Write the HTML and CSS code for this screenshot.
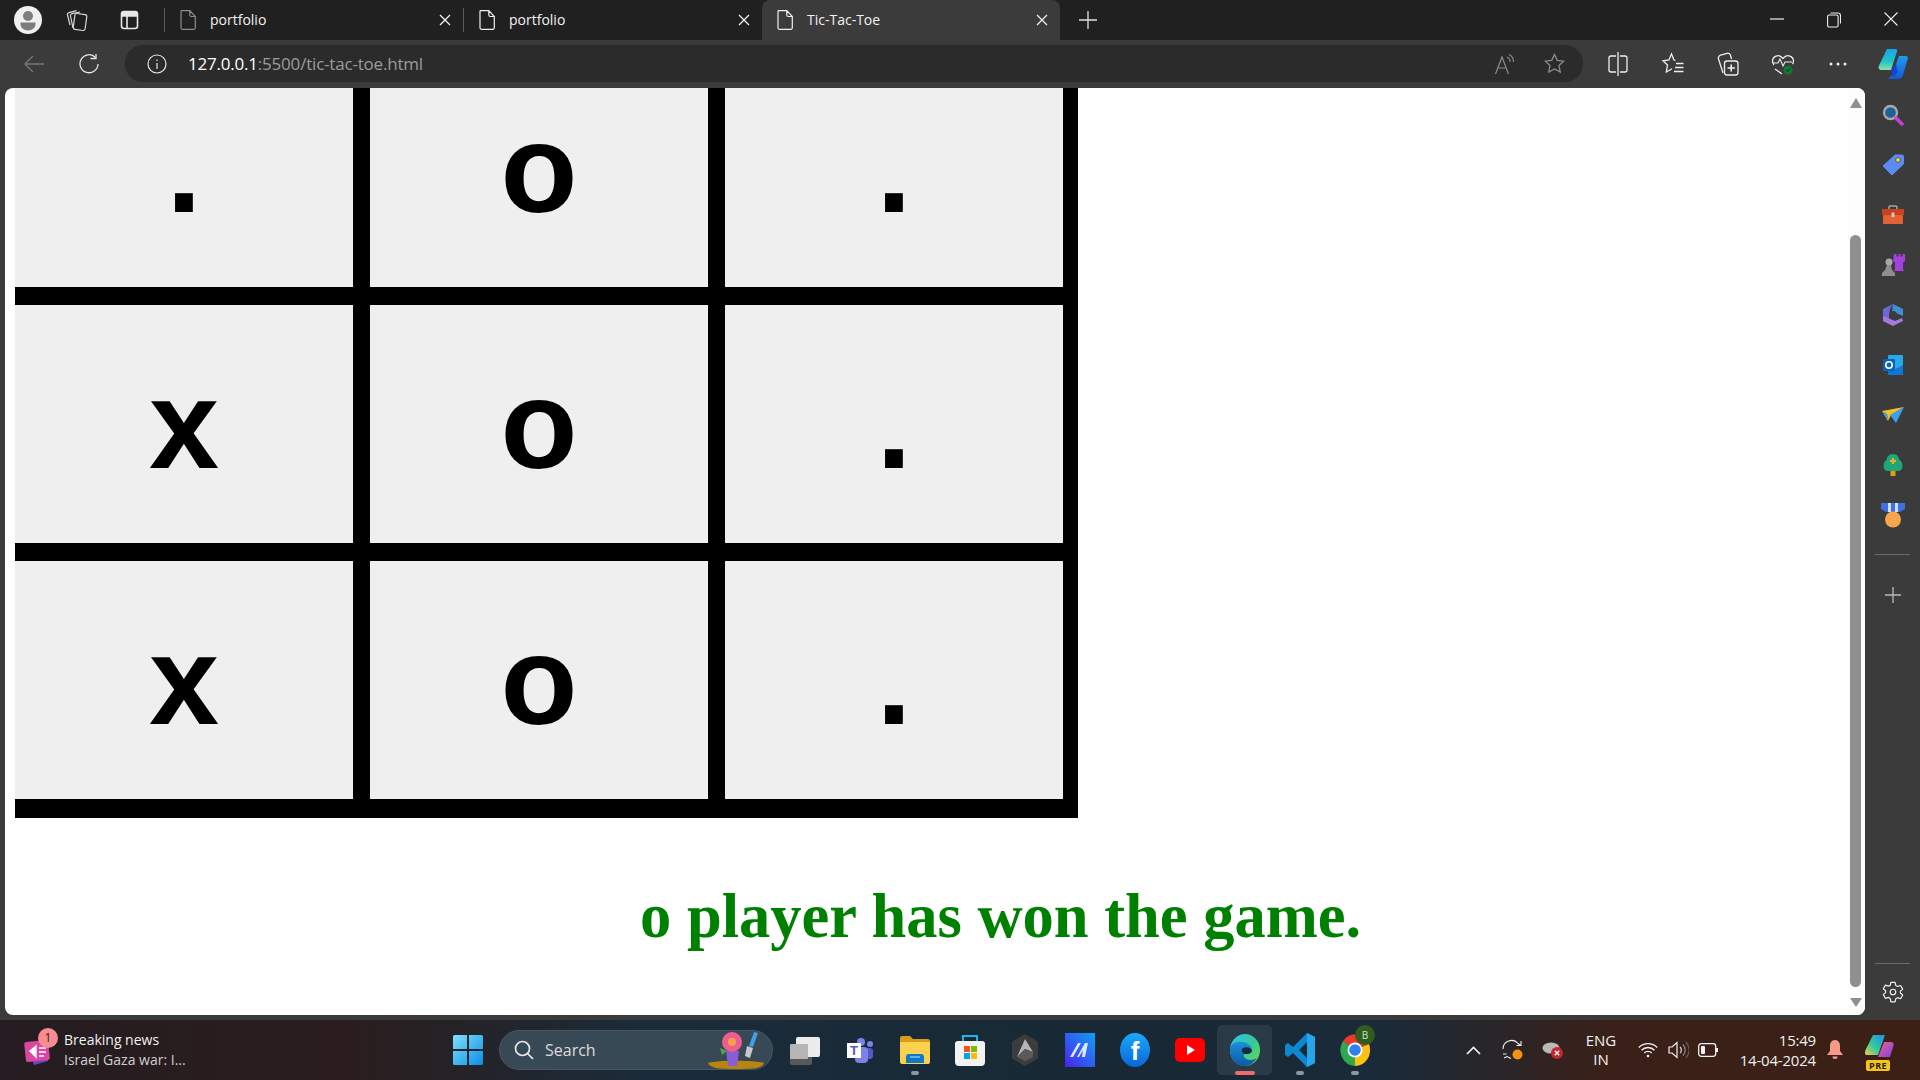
FILE: index.html
```html
<!DOCTYPE html>
<html lang="en">
<head>
    <meta charset="UTF-8">
    <meta name="viewport" content="width=device-width, initial-scale=1.0">
    <title>Tic-Tac-Toe</title>
    <link rel="stylesheet" href="styles.css">
</head>
<body>
    <svg class="defs" width="0" height="0">
        <symbol id="doc" viewBox="0 0 16 20"><path d="M2.5.7h7.3l5.5 5.8v11.3a1.5 1.5 0 0 1-1.5 1.5h-11.300a1.500 1.500 0 0 1-1.500-1.500v-16.100a1.500 1.500 0 0 1 1.500-1.500zM9.800.7v4.300a1.500 1.500 0 0 0 1.500 1.500h4" fill="none" stroke="currentColor" stroke-width="1.200"/></symbol>
        <symbol id="close" viewBox="0 0 12 12"><path d="M1 1l10 10M11 1l-10 10" stroke="currentColor" stroke-width="1.300" fill="none"/></symbol>
    </svg>

    <div class="tabstrip">
        <div class="avatar">
            <svg width="28" height="28" viewBox="0 0 28 28"><circle cx="14" cy="14" r="14" fill="#f0f0f0"/><circle cx="14" cy="10" r="5" fill="#7d7d7d"/><path d="M6.500 16.500h15v2a7.500 6 0 0 1-15 0z" fill="#7d7d7d"/></svg>
        </div>
        <div class="strip-btn">
            <svg width="22" height="24" viewBox="0 0 22 24" fill="none" stroke="#d8d8d8" stroke-width="1.200"><rect x="8" y="6" width="12" height="16" rx="2" transform="rotate(8 14 14)"/><path d="M7 20L4.500 8a2 2 0 0 1 1.600-2.400l8-1.600M4 17L1.500 7a2 2 0 0 1 1.500-2.400l7.500-2"/></svg>
        </div>
        <div class="strip-btn strip-btn-wide">
            <svg width="20" height="20" viewBox="0 0 20 20" fill="none" stroke="#e8e8e8" stroke-width="1.600"><rect x="1.500" y="1.500" width="16" height="17" rx="2.500"/><path d="M1.500 6h16M7 6v12.500"/><path d="M2 2h15v4H2z" fill="#e8e8e8" stroke="none"/></svg>
        </div>

        <div class="tab tab-first">
            <svg class="tab-icon dim"><use href="#doc"/></svg>
            <span class="tab-title">portfolio</span>
            <svg class="tab-close"><use href="#close"/></svg>
        </div>
        <div class="tab">
            <svg class="tab-icon"><use href="#doc"/></svg>
            <span class="tab-title">portfolio</span>
            <svg class="tab-close"><use href="#close"/></svg>
        </div>
        <div class="tab tab-active">
            <svg class="tab-icon"><use href="#doc"/></svg>
            <span class="tab-title">Tic-Tac-Toe</span>
            <svg class="tab-close"><use href="#close"/></svg>
        </div>
        <div class="new-tab">
            <svg width="18" height="18" viewBox="0 0 18 18"><path d="M9 0v18M0 9h18" stroke="#e4e4e4" stroke-width="1.300"/></svg>
        </div>

        <div class="window-btns">
            <div class="window-btn"><svg width="14" height="14" viewBox="0 0 14 14"><path d="M0 7h14" stroke="#eee" stroke-width="1.200"/></svg></div>
            <div class="window-btn"><svg width="14" height="16" viewBox="0 0 14 16" fill="none" stroke="#eee" stroke-width="1.100"><rect x=".6" y="3" width="10.500" height="12" rx="1.500"/><path d="M3.500 1h7.500a2.500 2.500 0 0 1 2.500 2.500v8"/></svg></div>
            <div class="window-btn"><svg width="14" height="14" viewBox="0 0 14 14"><path d="M.5.5l13 13M13.500.5l-13 13" stroke="#eee" stroke-width="1.100"/></svg></div>
        </div>
    </div>

    <div class="toolbar">
        <div class="nav-btn">
            <svg width="20" height="18" viewBox="0 0 20 18" fill="none" stroke="#777" stroke-width="1.400"><path d="M20 9H1M9 1L1 9l8 8"/></svg>
        </div>
        <div class="nav-btn">
            <svg width="20" height="20" viewBox="0 0 20 20" fill="none" stroke="#e6e6e6" stroke-width="1.300"><path d="M16.500 3.500A9 9 0 1 0 19 10"/><path d="M11.500 4.500h5.500v-5"/></svg>
        </div>
        <div class="address-bar">
            <svg class="info-icon" width="20" height="20" viewBox="0 0 20 20" fill="none" stroke="#e6e6e6" stroke-width="1.200"><circle cx="10" cy="10" r="9"/><path d="M10 9v6M10 5.500v1.500"/></svg>
            <span class="url"><span class="url-host">127.0.0.1</span>:5500/tic-tac-toe.html</span>
            <div class="address-actions">
                <svg width="22" height="22" viewBox="0 0 22 22" fill="none" stroke="#8c8c8c" stroke-width="1.200"><path d="M1.500 21L8 4l6.500 17M4 15h8"/><path d="M13 4a5 5 0 0 1 3 5M15 1.500a8 8 0 0 1 4.500 7.500"/></svg>
                <svg width="21" height="21" viewBox="0 0 21 21" fill="none" stroke="#8c8c8c" stroke-width="1.300"><path d="M10.500 1.500l2.800 5.900 6.400.8-4.700 4.400 1.200 6.400-5.700-3.100-5.700 3.100 1.200-6.400-4.700-4.400 6.400-.8z"/></svg>
            </div>
        </div>
        <div class="tool-btn">
            <svg width="20" height="24" viewBox="0 0 20 24" fill="none" stroke="#eee" stroke-width="1.300"><path d="M8 4H3a2 2 0 0 0-2 2v12a2 2 0 0 0 2 2h5M12 4h5a2 2 0 0 1 2 2v12a2 2 0 0 1-2 2h-5M10 0v24"/></svg>
        </div>
        <div class="tool-btn">
            <svg width="22" height="24" viewBox="0 0 22 24" fill="none" stroke="#eee" stroke-width="1.300"><path d="M13.500 8.500L12 8 9.500 2 7 8l-6 .8 4.500 4.300L4.300 20l5.700-3.200"/><path d="M14 11.500h7.500M13 15.500h8.500M12 19.500h9.500"/></svg>
        </div>
        <div class="tool-btn">
            <svg width="22" height="24" viewBox="0 0 22 24" fill="none" stroke="#eee" stroke-width="1.300"><path d="M6 21L1.500 7a3 3 0 0 1 2-3.800L10 1.300a3 3 0 0 1 3.500 2L14.500 7"/><rect x="7.500" y="9" width="13.500" height="14" rx="2.500"/><path d="M14.200 12.500v7M10.500 16h7.400" stroke-width="1.600"/></svg>
        </div>
        <div class="tool-btn">
            <svg width="24" height="24" viewBox="0 0 24 24" fill="none"><path d="M3 13a6 6 0 0 1-1.500-4A5.500 5.500 0 0 1 11 5.500l1 1 1-1A5.500 5.500 0 0 1 22.500 9a6 6 0 0 1-1 3.200M4 17l7 5" stroke="#eee" stroke-width="1.300"/><path d="M2 11h5l2-4 3 7 2-4h7" stroke="#eee" stroke-width="1.100"/><circle cx="17" cy="18" r="4.500" fill="#0f7b2f"/><path d="M15 18l1.500 1.500 2.500-3" stroke="#222" stroke-width="1"/></svg>
        </div>
        <div class="tool-btn">
            <svg width="18" height="4" viewBox="0 0 18 4" fill="#eee"><circle cx="2" cy="2" r="1.500"/><circle cx="9" cy="2" r="1.500"/><circle cx="16" cy="2" r="1.500"/></svg>
        </div>
        <div class="tool-btn">
            <svg width="30" height="32" viewBox="0 0 30 32">
                <defs>
                    <linearGradient id="cop-a" x1="0" y1="0" x2="0" y2="1"><stop offset="0" stop-color="#1aa5e8"/><stop offset=".6" stop-color="#22c3c8"/><stop offset="1" stop-color="#8fe0a0"/></linearGradient>
                    <linearGradient id="cop-b" x1="0" y1="0" x2="0" y2="1"><stop offset="0" stop-color="#1f9bf0"/><stop offset="1" stop-color="#1458d8"/></linearGradient>
                </defs>
                <path d="M9 1h8.500c1.500 0 2 1 1.500 2.500L13 22H4C1 22 0 20 .8 18z" fill="url(#cop-a)"/>
                <path d="M21 8h7c1.500 0 2.200 1.200 1.700 2.800L25 27c-.8 2.600-2.500 4-5 4H10l4-4z" fill="url(#cop-b)"/>
                <path d="M13 22l5-6 2 8-5 5z" fill="#1247c8"/>
            </svg>
        </div>
    </div>

    <div class="main">
        <div class="page">
            <div class="page-content">
                <div class="board">
                    <div class="cell">.</div>
                    <div class="cell">o</div>
                    <div class="cell">.</div>
                    <div class="cell">x</div>
                    <div class="cell">o</div>
                    <div class="cell">.</div>
                    <div class="cell">x</div>
                    <div class="cell">o</div>
                    <div class="cell">.</div>
                </div>
                <h1 class="message">o player has won the game.</h1>
            </div>
            <div class="scrollbar">
                <div class="arrow-up"></div>
                <div class="thumb"></div>
                <div class="arrow-down"></div>
            </div>
        </div>

        <div class="sidebar">
            <div class="side-btn">
                <svg width="22" height="22" viewBox="0 0 22 22"><circle cx="8.500" cy="8.500" r="6.500" fill="#1f5f94" stroke="#a8a8a8" stroke-width="2.400"/><path d="M14 14l6 6" stroke="#c93fd8" stroke-width="3.400" stroke-linecap="round"/></svg>
            </div>
            <div class="side-btn">
                <svg width="22" height="22" viewBox="0 0 22 22"><path d="M13 1h7a1.500 1.500 0 0 1 1.500 1.500V10L10 21 1 12z" fill="#5b8cf5" stroke="#5b8cf5" stroke-linejoin="round"/><circle cx="16" cy="6" r="2.400" fill="#f5d33a" stroke="#333" stroke-width=".7"/></svg>
            </div>
            <div class="side-btn">
                <svg width="24" height="20" viewBox="0 0 24 20"><path d="M8 5V2a1 1 0 0 1 1-1h6a1 1 0 0 1 1 1v3" fill="none" stroke="#a5a5a5" stroke-width="1.500"/><rect x="1" y="4" width="22" height="6" fill="#c8421e"/><rect x="2" y="10" width="20" height="9" rx="1" fill="#e26236"/><rect x="10.500" y="7.500" width="3" height="4.500" fill="#c9c9c9"/></svg>
            </div>
            <div class="side-btn">
                <svg width="24" height="24" viewBox="0 0 24 24"><path d="M13 1h2.500v2.500h2V1h2v2.500h2V1H24v7l-2 1.500V16l1 2H13l1-2V9.500L12 8z" fill="#a43fe0"/><circle cx="8" cy="9" r="3.500" fill="#a8a8a8"/><path d="M6 12h4l1 5 3 3v3H1v-3l3-3z" fill="#8f8f8f"/></svg>
            </div>
            <div class="side-btn">
                <svg width="22" height="24" viewBox="0 0 22 24"><path d="M11 1l10 5v7l-7-3-4 3v-4z" fill="#3f8fd8"/><path d="M1 6l10-5-3 5-1 10-6 1z" fill="#6a68d8"/><path d="M1 13l0 5 10 5 10-5-1-3-7 3z" fill="#a57ae0"/><circle cx="11" cy="12" r="4" fill="#3b3b3b"/></svg>
            </div>
            <div class="side-btn">
                <svg width="22" height="22" viewBox="0 0 22 22"><rect x="6" y="1" width="15" height="20" rx="1" fill="#28a8ea"/><path d="M6 11l7.500 4L21 11v10H6z" fill="#0f78d4"/><rect x="1" y="5" width="12" height="12" rx="1" fill="#0864b8"/><circle cx="7" cy="11" r="3.200" fill="none" stroke="#fff" stroke-width="1.600"/></svg>
            </div>
            <div class="side-btn">
                <svg width="22" height="18" viewBox="0 0 22 18"><path d="M0 5l22-4-13 8-3 6z" fill="#f3c221"/><path d="M0 5l5 3 2 7z" fill="#2f9ae8"/><path d="M22 1L14 17 8 9z" fill="#3aa0ee"/></svg>
            </div>
            <div class="side-btn">
                <svg width="20" height="24" viewBox="0 0 20 24"><rect x="7.500" y="17" width="5" height="6" fill="#e0a010"/><path d="M10 1c4 0 6 3 6.500 6 2 1 3 3.500 3 6 0 3-2 5-4.500 5H5c-2.500 0-4.500-2-4.500-5 0-2.500 1-5 3-6C4 4 6 1 10 1z" fill="#1fa77a"/><path d="M10 5v6M7 8h6" stroke="#f0b020" stroke-width="2"/></svg>
            </div>
            <div class="side-btn">
                <svg width="26" height="26" viewBox="0 0 26 26"><path d="M1 1h24v6l-5 3H6L1 7z" fill="#3f6fe0"/><path d="M8 1h10v9H8z" fill="#cfe0ff"/><path d="M11 1h4v10h-4z" fill="#3f6fe0"/><circle cx="13" cy="17.500" r="8" fill="#f7a64d"/></svg>
            </div>
            <div class="side-sep side-sep-first"></div>
            <div class="side-btn side-plus">
                <svg width="16" height="16" viewBox="0 0 16 16"><path d="M8 0v16M0 8h16" stroke="#bbb" stroke-width="1.300"/></svg>
            </div>
            <div class="side-sep side-sep-last"></div>
            <div class="side-gear">
                <svg width="22" height="22" viewBox="0 0 24 24" fill="none" stroke="#eee" stroke-width="1.300"><circle cx="12" cy="12" r="3"/><path d="M9.700 1.500h4.600l.7 3.300 2.100 1.200 3.200-1.100 2.300 4-2.500 2.200v2l2.500 2.200-2.300 4-3.200-1.100-2.100 1.200-.7 3.300H9.700L9 19l-2.100-1.200-3.200 1.100-2.300-4 2.500-2.200v-2L1.400 8.500l2.300-4 3.200 1.100L9 4.800z" stroke-linejoin="round"/></svg>
            </div>
        </div>
    </div>

    <div class="taskbar">
        <div class="news">
            <div class="news-icon">
                <svg width="30" height="34" viewBox="0 0 30 34"><path d="M3 12l18-4 3 20-14 4z" fill="#6a42d0"/><rect x="1" y="8" width="24" height="20" rx="2" fill="#d9479e" transform="rotate(-6 13 18)"/><path d="M6 18l6-5v11zM15 15h7M15 19h7M15 23h5" fill="#fff" stroke="#fff" stroke-width="1.400"/></svg>
                <span class="news-badge">1</span>
            </div>
            <div class="news-text">
                <div class="news-title">Breaking news</div>
                <div class="news-sub">Israel Gaza war: I...</div>
            </div>
        </div>

        <div class="start">
            <svg width="30" height="30" viewBox="0 0 30 30">
                <defs><linearGradient id="win" x1="0" y1="0" x2="1" y2="1"><stop offset="0" stop-color="#7fe0fb"/><stop offset="1" stop-color="#0a8fe8"/></linearGradient></defs>
                <path d="M0 1.500A1.500 1.500 0 0 1 1.500 0H14v14H0zM16 0h12.500A1.500 1.500 0 0 1 30 1.500V14H16zM0 16h14v14H1.500A1.500 1.500 0 0 1 0 28.500zM16 16h14v12.500a1.500 1.500 0 0 1-1.500 1.500H16z" fill="url(#win)"/>
            </svg>
        </div>

        <div class="search">
            <svg width="20" height="20" viewBox="0 0 20 20" fill="none" stroke="#e8e8e8" stroke-width="1.700"><circle cx="8.500" cy="8.500" r="7"/><path d="M13.500 13.500L19 19"/></svg>
            <span class="search-label">Search</span>
            <svg class="search-art" width="58" height="38" viewBox="0 0 58 38"><path d="M1 32c8-3 48-3 56 0-2 5-8 6-28 6S4 37 1 32z" fill="#b8860f"/><path d="M19 20h13l-2 15h-9z" fill="#8a5cd6"/><path d="M13 17l7 3-5 4z" fill="#4aa84a"/><circle cx="25" cy="11" r="10" fill="#ef5c8e"/><circle cx="25" cy="11" r="4" fill="#f5a14a"/><path d="M47 1l4 1-5 14-4-1z" fill="#3f9fe8"/><path d="M40 15l6 2-3 10-5-2z" fill="#c8c8c8"/></svg>
        </div>

        <div class="apps">
            <div class="app">
                <svg width="30" height="30" viewBox="0 0 30 30"><rect x="0" y="12" width="22" height="18" rx="2" fill="#595959"/><rect x="6" y="2" width="24" height="20" rx="2" fill="#ececec"/><rect x="0" y="9" width="18" height="15" rx="1" fill="#b5b5b5"/></svg>
            </div>
            <div class="app">
                <svg width="28" height="28" viewBox="0 0 28 28"><circle cx="24" cy="8" r="3" fill="#7b83eb"/><circle cx="15" cy="6" r="4" fill="#7b83eb"/><rect x="19" y="12" width="8" height="11" rx="3" fill="#5059c9"/><rect x="9" y="11" width="13" height="16" rx="4" fill="#7b83eb"/><rect x="1" y="7" width="14" height="15" fill="#fff"/><text x="8" y="19" class="teams-t">T</text></svg>
            </div>
            <div class="app">
                <svg width="30" height="28" viewBox="0 0 30 28"><path d="M0 2a2 2 0 0 1 2-2h8l3 3h15a2 2 0 0 1 2 2v6H0z" fill="#d89b1c"/><path d="M0 6h30v20a2 2 0 0 1-2 2H2a2 2 0 0 1-2-2z" fill="#fcd14d"/><path d="M6 27v-6a3 3 0 0 1 3-3h12a3 3 0 0 1 3 3v6z" fill="#0f78c8"/><path d="M10 21h10" stroke="#7fd0f5" stroke-width="1.400"/></svg>
                <span class="app-dot"></span>
            </div>
            <div class="app">
                <svg width="30" height="32" viewBox="0 0 30 32"><path d="M8 8V2h14v6" fill="none" stroke="#19b4ee" stroke-width="2"/><path d="M0 9a3 3 0 0 1 3-2h24a3 3 0 0 1 3 2v19a4 4 0 0 1-4 4H4a4 4 0 0 1-4-4z" fill="#f2f2f2"/><rect x="9" y="12" width="6" height="6" fill="#f25022"/><rect x="16" y="12" width="6" height="6" fill="#7fba00"/><rect x="9" y="19" width="6" height="6" fill="#00a4ef"/><rect x="16" y="19" width="6" height="6" fill="#ffb900"/></svg>
            </div>
            <div class="app">
                <svg width="26" height="32" viewBox="0 0 26 32"><path d="M13 0l13 7.500v17L13 32 0 24.500v-17z" fill="#3c3c3c"/><path d="M13 5l8 13-8-3-8 8z" fill="#b5b5b5"/><path d="M5 23l8-8 8 3 0 5-8 4z" fill="#5a5a5a"/></svg>
            </div>
            <div class="app">
                <svg width="30" height="34" viewBox="0 0 30 34"><defs><linearGradient id="ma" x1="0" y1="1" x2="1" y2="0"><stop offset="0" stop-color="#4a22f0"/><stop offset="1" stop-color="#10a0f5"/></linearGradient></defs><rect width="30" height="34" fill="url(#ma)"/><path d="M5 24L13 10h3L8 24zM12 24l8-14h3l-3 14h-3l1-7-4 7z" fill="#dfe6ff"/></svg>
            </div>
            <div class="app">
                <svg width="30" height="34" viewBox="0 0 30 34"><defs><linearGradient id="fb" x1="0" y1="0" x2="0" y2="1"><stop offset="0" stop-color="#19aaf8"/><stop offset="1" stop-color="#0a66d8"/></linearGradient></defs><ellipse cx="15" cy="17" rx="15" ry="17" fill="url(#fb)"/><text x="15" y="27" class="fb-f">f</text></svg>
            </div>
            <div class="app">
                <svg width="30" height="24" viewBox="0 0 30 24"><rect width="30" height="24" rx="5" fill="#ff0000"/><path d="M12 7l8 5-8 5z" fill="#fff"/></svg>
            </div>
            <div class="app app-active">
                <svg width="30" height="32" viewBox="0 0 30 32">
                    <defs>
                        <linearGradient id="edge-a" x1="0" y1="0" x2="1" y2="1"><stop offset="0" stop-color="#35c1f1"/><stop offset=".5" stop-color="#34c8a0"/><stop offset="1" stop-color="#6fdc3e"/></linearGradient>
                        <linearGradient id="edge-b" x1="0" y1="0" x2="0" y2="1"><stop offset="0" stop-color="#1c8fd8"/><stop offset="1" stop-color="#0c59a4"/></linearGradient>
                    </defs>
                    <ellipse cx="15" cy="16" rx="15" ry="16" fill="url(#edge-a)"/>
                    <path d="M0 16C0 9 7 7 13 8c5 1 9 4 9 8 0 3-3 4-6 4 -3 0-3 2-1 4 3 3 9 2 12 0-3 5-8 8-12 8C6 32 0 25 0 16z" fill="url(#edge-b)"/>
                    <path d="M12 15c3-3 8-2 10 1 0 3-3 4-6 4-2 0-5-2-4-5z" fill="#1b2a38"/>
                </svg>
                <span class="app-dot app-dot-active"></span>
            </div>
            <div class="app">
                <svg width="30" height="34" viewBox="0 0 30 34"><path d="M22 0l8 4v26l-8 4L8 20l-5 4-3-2v-10l3-2 5 4zM22 9l-8 8 8 8z" fill="#0e87d2" fill-rule="evenodd"/><path d="M22 0l8 4v26l-8 4z" fill="#27a5ea"/></svg>
                <span class="app-dot"></span>
            </div>
            <div class="app app-chrome">
                <svg width="30" height="32" viewBox="0 0 30 32"><path d="M15 16L3 7A15 16 0 0 1 29 10z" fill="#e8392e"/><path d="M15 16L29 10A15 16 0 0 1 15 32z" fill="#fbc113"/><path d="M15 16L15 32A15 16 0 0 1 3 7z" fill="#2fa84f"/><circle cx="15" cy="16" r="7.500" fill="#fff"/><circle cx="15" cy="16" r="5.800" fill="#2b82ee"/></svg>
                <span class="profile-badge">B</span>
                <span class="app-dot"></span>
            </div>
        </div>

        <div class="tray">
            <div class="tray-btn">
                <svg width="15" height="9" viewBox="0 0 15 9" fill="none" stroke="#f2f2f2" stroke-width="1.700"><path d="M1 8l6.500-6.500L14 8"/></svg>
            </div>
            <div class="tray-btn">
                <svg width="22" height="22" viewBox="0 0 22 22"><g fill="none" stroke="#eee" stroke-width="1.100"><path d="M1 10a8.500 8.500 0 0 1 15-5.500l3 2"/><path d="M19 2v4.500h-4.500"/><path d="M1 15l3.500 0M2 19l3-1.500 4 2"/></g><circle cx="15.500" cy="15.500" r="5" fill="#f7930e"/></svg>
            </div>
            <div class="tray-btn">
                <svg width="22" height="20" viewBox="0 0 22 20"><ellipse cx="9" cy="8" rx="8.500" ry="5.500" fill="#b9b9b9"/><circle cx="15" cy="13" r="6" fill="#c4262e"/><path d="M12.800 10.800l4.400 4.400M17.200 10.800l-4.400 4.400" stroke="#fff" stroke-width="1.300"/></svg>
            </div>
            <div class="lang">ENG<br>IN</div>
            <div class="tray-icon tray-wifi">
                <svg width="20" height="16" viewBox="0 0 20 16" fill="none" stroke="#f2f2f2" stroke-width="1.300"><path d="M.8 5.500a13 13 0 0 1 18.400 0M3.500 8.300a9 9 0 0 1 13 0M6.300 11a5 5 0 0 1 7.400 0"/><circle cx="10" cy="14" r="1.300" fill="#f2f2f2" stroke="none"/></svg>
            </div>
            <div class="tray-icon">
                <svg width="21" height="18" viewBox="0 0 21 18" fill="none" stroke-width="1.200"><path d="M1 6h3l5-4.500v15L4 12H1z" stroke="#f2f2f2"/><path d="M12 6a4 4 0 0 1 0 6" stroke="#d8d8d8"/><path d="M15 3.500a8 8 0 0 1 0 11" stroke="#8a8a8a"/><path d="M18 1a12 12 0 0 1 0 16" stroke="#5f5a58"/></svg>
            </div>
            <div class="tray-icon">
                <svg width="21" height="14" viewBox="0 0 21 14" fill="none"><rect x=".7" y=".7" width="17" height="12.600" rx="2.500" stroke="#f2f2f2" stroke-width="1.300"/><rect x="3" y="3" width="4" height="8" rx="1" fill="#f2f2f2"/><path d="M19 5v4" stroke="#f2f2f2" stroke-width="2"/></svg>
            </div>
            <div class="clock">15:49<br>14-04-2024</div>
            <div class="bell">
                <svg width="16" height="20" viewBox="0 0 16 20" fill="#f79a8a"><path d="M8 0c3.500 0 5 3 5 6v5l3 4H0l3-4V6c0-3 1.500-6 5-6z"/><path d="M5.500 16.500h5a2.500 2.500 0 0 1-5 0z"/></svg>
            </div>
            <div class="tray-copilot">
                <svg width="30" height="30" viewBox="0 0 30 30">
                    <defs><linearGradient id="cop-c" x1="0" y1="1" x2="1" y2="0"><stop offset="0" stop-color="#f0d040"/><stop offset=".45" stop-color="#30c8a0"/><stop offset="1" stop-color="#2090f0"/></linearGradient>
                    <linearGradient id="cop-d" x1="0" y1="0" x2="1" y2="1"><stop offset="0" stop-color="#f06090"/><stop offset="1" stop-color="#8040e0"/></linearGradient></defs>
                    <path d="M8 0h12l-7 20H2C0 20-.5 18 .5 15z" fill="url(#cop-c)"/>
                    <path d="M19 7h7c2 0 3 1.500 2.500 3.500L25 22H13z" fill="url(#cop-d)"/>
                </svg>
                <span class="pre-tag">PRE</span>
            </div>
        </div>
    </div>
</body>
</html>
```

FILE: styles.css
```css
* {
    box-sizing: border-box;
}
html, body {
    margin: 0;
    height: 100%;
    overflow: hidden;
}
body {
    display: flex;
    flex-direction: column;
    height: 1080px;
    background: #3b3b3b;
    font-family: "Open Sans", "Noto Sans", sans-serif;
    color: #f2f2f2;
}
svg {
    display: block;
}
.defs {
    position: absolute;
}

/* tab strip */
.tabstrip {
    display: flex;
    align-items: center;
    height: 40px;
    padding-left: 14px;
    background: #202020;
}
.avatar {
    width: 28px;
    height: 28px;
}
.strip-btn {
    display: flex;
    justify-content: center;
    width: 28px;
    margin-left: 21px;
}
.strip-btn-wide {
    margin-left: 25px;
    margin-right: 20px;
}
.tab {
    display: flex;
    align-items: center;
    width: 299px;
    height: 24px;
    padding: 0 12px 0 15px;
    border-left: 1px solid #5c5c5c;
    font-size: 14px;
}
.tab-icon {
    width: 16px;
    height: 20px;
    color: #f0f0f0;
}
.tab-icon.dim {
    color: #8c8c8c;
}
.tab-title {
    margin-left: 14px;
    padding-bottom: 2px;
}
.tab-close {
    width: 12px;
    height: 12px;
    margin-left: auto;
    color: #f0f0f0;
}
.tab-active {
    align-self: flex-end;
    height: 40px;
    width: 298px;
    padding: 0 12px 0 15px;
    border-left: 0;
    background: #3b3b3b;
    border-radius: 8px 8px 0 0;
}
.new-tab {
    margin-left: 19px;
}
.window-btns {
    display: flex;
    margin-left: auto;
    padding-right: 1px;
}
.window-btn {
    display: flex;
    justify-content: center;
    width: 57px;
}

/* toolbar */
.toolbar {
    display: flex;
    align-items: flex-start;
    height: 48px;
    padding: 5px 0 0 7px;
    background: #3b3b3b;
}
.nav-btn {
    display: flex;
    align-items: center;
    justify-content: center;
    width: 55px;
    height: 37px;
}
.address-bar {
    display: flex;
    align-items: center;
    width: 1460px;
    height: 37px;
    margin-left: 8px;
    margin-right: 7px;
    padding: 0 18px 0 22px;
    background: #2b2b2b;
    border-radius: 18px;
}
.info-icon {
    flex: none;
}
.url {
    margin-left: 21px;
    font-size: 17px;
    letter-spacing: -0.2px;
    color: #9b9b9b;
}
.url-host {
    color: #fff;
}
.address-actions {
    display: flex;
    align-items: center;
    gap: 28px;
    margin-left: auto;
}
.tool-btn {
    display: flex;
    align-items: center;
    justify-content: center;
    width: 55px;
    height: 37px;
}

/* page */
.main {
    display: flex;
    height: 932px;
}
.page {
    display: flex;
    width: 1860px;
    height: 927px;
    margin-left: 5px;
    background: #fff;
    border-radius: 8px;
    overflow: hidden;
}
.page-content {
    flex: 1;
    padding-left: 10px;
}
.board {
    display: grid;
    grid-template-columns: repeat(3, 338px);
    grid-template-rows: repeat(3, 238px);
    column-gap: 17px;
    row-gap: 18px;
    width: 1063px;
    margin-top: -39px;
    padding: 0 15px 19px 0;
    background: #000;
}
.cell {
    display: flex;
    align-items: center;
    justify-content: center;
    background: #efefef;
    color: #000;
    font-family: "Liberation Sans", Arial, sans-serif;
    font-size: 126px;
    font-weight: bold;
}
.message {
    margin: 62px 0 0 625px;
    font-family: "Liberation Serif", "Times New Roman", serif;
    font-size: 62.5px;
    font-weight: bold;
    color: #008000;
    white-space: nowrap;
}
.scrollbar {
    display: flex;
    flex-direction: column;
    align-items: center;
    width: 17px;
    padding: 10px 4px 8px 2px;
    background: #fdfdfd;
}
.arrow-up {
    width: 0;
    height: 0;
    border-left: 6.5px solid transparent;
    border-right: 6.5px solid transparent;
    border-bottom: 10px solid #8f8f8f;
}
.arrow-down {
    width: 0;
    height: 0;
    margin-top: 11px;
    border-left: 6.5px solid transparent;
    border-right: 6.5px solid transparent;
    border-top: 9px solid #8f8f8f;
}
.thumb {
    width: 11px;
    height: 752px;
    margin-top: 127px;
    background: #8f8f8f;
    border-radius: 6px;
}

/* sidebar */
.sidebar {
    display: flex;
    flex-direction: column;
    align-items: center;
    flex: 1;
    padding-top: 2px;
}
.side-btn {
    display: flex;
    align-items: center;
    justify-content: center;
    width: 100%;
    height: 50px;
}
.side-sep {
    width: 35px;
    height: 1px;
    background: #6a6a6a;
}
.side-sep-first {
    margin-top: 14px;
}
.side-plus {
    margin-top: 15px;
}
.side-sep-last {
    margin-top: 343px;
}
.side-gear {
    margin-top: 17px;
}

/* taskbar */
.taskbar {
    display: flex;
    align-items: center;
    height: 60px;
    background: linear-gradient(90deg, #241c20 0%, #2b1d1d 18%, #1a2c3a 34%, #182935 60%, #1a2a38 72%, #3a2018 84%, #3c2016 100%);
    font-size: 14px;
}
.news {
    display: flex;
    align-items: center;
    width: 440px;
    padding-left: 24px;
}
.news-icon {
    position: relative;
    width: 30px;
    height: 34px;
}
.news-badge {
    position: absolute;
    top: -5px;
    left: 14px;
    width: 20px;
    height: 20px;
    border-radius: 50%;
    background: #f98b93;
    color: #3a1a1a;
    font-size: 12px;
    line-height: 20px;
    text-align: center;
}
.news-text {
    margin-left: 10px;
    font-size: 14px;
    line-height: 20px;
}
.news-sub {
    color: #cfcfcf;
}
.start {
    display: flex;
    justify-content: center;
    width: 56px;
}
.search {
    display: flex;
    align-items: center;
    width: 274px;
    height: 40px;
    margin-left: 3px;
    padding-left: 14px;
    background: #384956;
    border: 1px solid #465763;
    border-radius: 20px;
}
.search-label {
    margin-left: 11px;
    font-size: 16px;
    color: #dcdcdc;
}
.search-art {
    margin-left: auto;
    margin-right: 7px;
}
.apps {
    display: flex;
    margin-left: 4px;
}
.app {
    position: relative;
    display: flex;
    align-items: center;
    justify-content: center;
    width: 55px;
    height: 50px;
    border-radius: 5px;
}
.app-active {
    background: #2b3a47;
}
.app-dot {
    position: absolute;
    bottom: 0;
    left: 24px;
    width: 8px;
    height: 4px;
    border-radius: 2px;
    background: #8f979e;
}
.app-dot-active {
    left: 18px;
    width: 20px;
    background: #f26a6a;
}
.teams-t {
    font-family: "Liberation Sans", Arial, sans-serif;
    font-size: 13px;
    font-weight: bold;
    fill: #5059c9;
    text-anchor: middle;
}
.fb-f {
    font-family: "Liberation Sans", Arial, sans-serif;
    font-size: 26px;
    font-weight: bold;
    fill: #fff;
    text-anchor: middle;
}
.profile-badge {
    position: absolute;
    top: 0;
    left: 28px;
    width: 20px;
    height: 20px;
    border-radius: 50%;
    background: #2f5d1e;
    color: #cfe0c0;
    font-size: 10px;
    line-height: 20px;
    text-align: center;
}
.tray {
    display: flex;
    align-items: center;
    margin-left: 71px;
}
.tray-btn {
    display: flex;
    justify-content: center;
    width: 40px;
}
.lang {
    width: 56px;
    font-size: 15px;
    line-height: 19px;
    text-align: center;
}
.tray-icon {
    display: flex;
    justify-content: center;
    width: 30px;
}
.tray-wifi {
    margin-left: 4px;
}
.clock {
    width: 93px;
    font-size: 15px;
    line-height: 20px;
    text-align: right;
    letter-spacing: -0.2px;
}
.bell {
    display: flex;
    justify-content: center;
    width: 38px;
}
.tray-copilot {
    position: relative;
    display: flex;
    justify-content: center;
    width: 52px;
}
.pre-tag {
    position: absolute;
    bottom: -6px;
    left: 12px;
    padding: 0 3px;
    border-radius: 2px;
    background: #f5c518;
    color: #222;
    font-size: 9px;
    font-weight: bold;
    line-height: 11px;
    letter-spacing: 0.5px;
}
```
